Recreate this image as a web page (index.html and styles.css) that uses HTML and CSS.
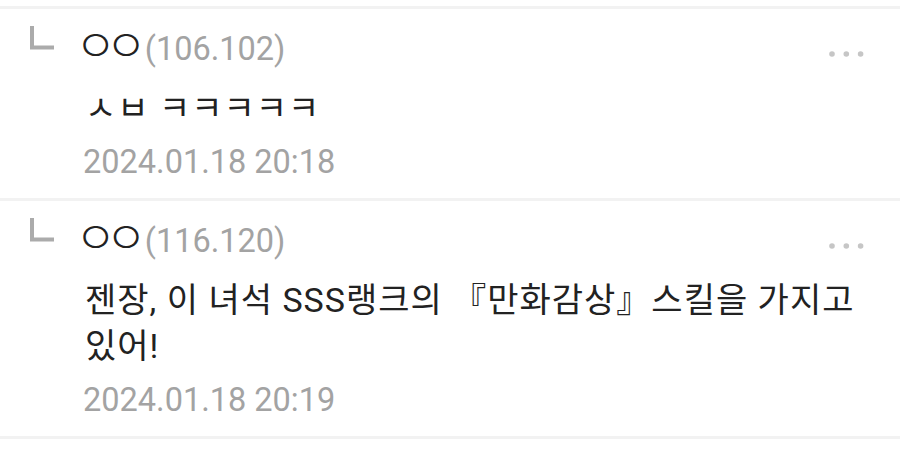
FILE: index.html
```html
<!DOCTYPE html>
<html lang="ko">

<head>
    <meta charset="UTF-8">
    <meta name="viewport" content="width=device-width, initial-scale=1.0">
    <title>댓글</title>
    <link rel="stylesheet" href="styles.css">
</head>

<body>
    <ul class="comment-list">
        <li class="comment">
            <svg class="reply-mark" viewBox="0 0 24 24" width="24" height="24">
                <path d="M2 0 V21.5 H24" />
            </svg>
            <div class="comment-body">
                <div class="comment-head">
                    <span class="nick">ㅇㅇ</span><span class="ip">(106.102)</span>
                    <button class="more" type="button" aria-label="더보기">
                        <svg viewBox="0 0 38 6" width="38" height="6">
                            <circle cx="3" cy="3" r="2.8" />
                            <circle cx="17.3" cy="3" r="2.8" />
                            <circle cx="31.6" cy="3" r="2.8" />
                        </svg>
                    </button>
                </div>
                <p class="comment-text">ㅅㅂ ㅋㅋㅋㅋㅋ</p>
                <div class="comment-date">2024.01.18 20:18</div>
            </div>
        </li>
        <li class="comment">
            <svg class="reply-mark" viewBox="0 0 24 24" width="24" height="24">
                <path d="M2 0 V21.5 H24" />
            </svg>
            <div class="comment-body">
                <div class="comment-head">
                    <span class="nick">ㅇㅇ</span><span class="ip">(116.120)</span>
                    <button class="more" type="button" aria-label="더보기">
                        <svg viewBox="0 0 38 6" width="38" height="6">
                            <circle cx="3" cy="3" r="2.8" />
                            <circle cx="17.3" cy="3" r="2.8" />
                            <circle cx="31.6" cy="3" r="2.8" />
                        </svg>
                    </button>
                </div>
                <p class="comment-text">젠장, 이 녀석 SSS랭크의 『만화감상』스킬을 가지고 있어!</p>
                <div class="comment-date">2024.01.18 20:19</div>
            </div>
        </li>
    </ul>
</body>

</html>
```

FILE: styles.css
```css
* {
    margin: 0;
    padding: 0;
    box-sizing: border-box;
}

body {
    font-family: Roboto, "Noto Sans CJK KR", sans-serif;
    background: #ffffff;
    color: #222222;
    width: 900px;
    height: 458px;
    overflow: hidden;
}

.comment-list {
    list-style: none;
    padding-top: 6px;
}

.comment {
    display: flex;
    align-items: flex-start;
    border-top: 3px solid #f2f2f2;
    padding: 20px 33px 16px 30px;
}

.comment:last-child {
    border-bottom: 3px solid #f2f2f2;
}

/* ㄴ 모양 답글 표시 */
.reply-mark {
    flex: none;
    width: 24px;
    height: 24px;
    margin-top: -3px;
    margin-right: 31px;
}

.reply-mark path {
    fill: none;
    stroke: #ababab;
    stroke-width: 4;
}

.comment-body {
    flex: 1;
    min-width: 0;
}

.comment-head {
    display: flex;
    align-items: center;
    height: 40px;
    line-height: 40px;
    white-space: nowrap;
}

/* 자모 닉네임은 크게, 글자 사이는 좁게 */
.nick {
    font-size: 45px;
    font-weight: 300;
    letter-spacing: -11px;
    color: #222222;
    margin-left: -10px;
    margin-right: 9px;
    margin-top: -4px;
}

.ip {
    font-size: 32.5px;
    color: #a3a3a3;
}

.more {
    margin-left: auto;
    border: 0;
    background: none;
    line-height: 0;
    margin-top: 10px;
}

.more circle {
    fill: #c6c6c6;
}

.comment-text {
    font-size: 34px;
    letter-spacing: 1px;
    line-height: 46px;
    color: #222222;
    margin-top: 16px;
    word-break: keep-all;
}

.comment-date {
    font-size: 32.5px;
    line-height: 40px;
    color: #a3a3a3;
    margin-top: 11px;
    margin-left: -2px;
}
```
